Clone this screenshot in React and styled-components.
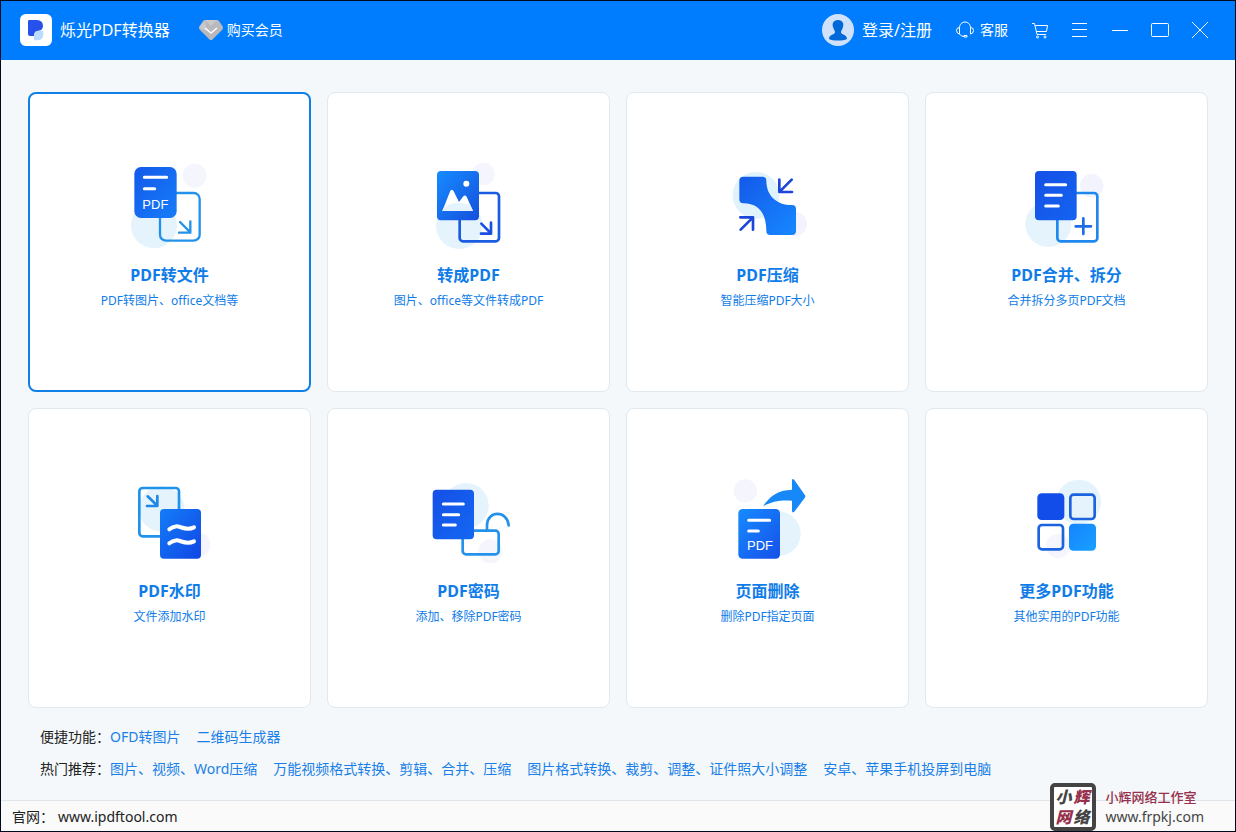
import React, { useState } from 'react';
import styled, { createGlobalStyle } from 'styled-components';

const GlobalStyle = createGlobalStyle`
  * {
    box-sizing: border-box;
  }

  body {
    margin: 0;
    font-family: "Noto Sans", "Noto Sans CJK SC", sans-serif;
    font-size: 14px;
    line-height: 20px;
    color: #222;
  }

  button {
    font-family: inherit;
    border: none;
    background: none;
    padding: 0;
    cursor: pointer;
  }

  a {
    text-decoration: none;
  }
`;

const Window = styled.div`
  position: relative;
  display: flex;
  flex-direction: column;
  min-height: 100vh;
  border: 1px solid #000a1c;
  background: #f4f8fa;
`;

const Header = styled.header`
  display: flex;
  align-items: center;
  height: 59px;
  padding: 0 15px 1px 19px;
  background: #007dff;
  color: #fff;
`;

const AppName = styled.h1`
  margin: 0 29px 0 8px;
  font-size: 16px;
  line-height: 24px;
  font-weight: 400;
`;

const HeaderButton = styled.button`
  display: flex;
  align-items: center;
  gap: ${({ $gap }) => $gap}px;
  margin-right: ${({ $after }) => $after || 0}px;
  color: #fff;
  font-size: ${({ $size }) => $size || 14}px;
  line-height: 24px;
`;

const Spacer = styled.div`
  flex: 1;
`;

const ToolButton = styled.button`
  display: flex;
  align-items: center;
  justify-content: center;
  width: 40px;
  height: 40px;
`;

const Stroke = styled.svg`
  fill: none;
  stroke: #fff;
  stroke-width: 1;
`;

const Main = styled.main`
  flex: 1;
  display: flex;
  flex-direction: column;
  padding: 32px 27px 15px;
`;

const Grid = styled.div`
  flex: 1;
  display: grid;
  grid-template-columns: repeat(4, 1fr);
  grid-auto-rows: 1fr;
  gap: 16px;
`;

const Card = styled.button`
  display: flex;
  flex-direction: column;
  align-items: center;
  justify-content: center;
  padding: 0 0 15px;
  min-height: 200px;
  border-radius: 8px;
  border: ${({ $active }) => ($active ? '2px solid #1080e6' : '1px solid #e1e9ee')};
  background: #fff;
  color: #0f7ce8;
`;

const CardIcon = styled.svg`
  width: 101px;
  height: 100px;
  font-family: "Liberation Sans", Arial, sans-serif;
`;

const CardTitle = styled.span`
  margin-top: 5px;
  font-size: 16px;
  line-height: 24px;
  font-weight: 700;
`;

const CardText = styled.span`
  margin-top: 4px;
  font-size: 12px;
  line-height: 20px;
`;

const Links = styled.section`
  margin-top: 13px;
  padding-left: 12px;
`;

const LinkRow = styled.div`
  display: flex;
  flex-wrap: wrap;
  column-gap: 16px;
  line-height: 32px;
`;

const LinkLabel = styled.span`
  width: 54px;
  white-space: nowrap;
`;

const Link = styled.a`
  color: #1a7fe8;
`;

const Footer = styled.footer`
  display: flex;
  align-items: center;
  height: 31px;
  padding: 2px 0 0 11px;
  border-top: 1px solid #e1e6ea;
  background: #fafafa;
`;

const SiteLink = styled.a`
  margin-left: 4px;
  color: #222;
`;

const Studio = styled.aside`
  position: absolute;
  right: 31px;
  bottom: 0;
  display: flex;
  align-items: center;
  gap: 9px;
`;

const Stamp = styled.div`
  display: grid;
  grid-template-columns: 18px 18px;
  align-content: center;
  justify-content: center;
  width: 46px;
  height: 48px;
  border: 4px solid #444;
  border-radius: 5px;
  background: #fff;
  color: #444;
  font-size: 16px;
  line-height: 20px;
  font-weight: 900;
  font-style: italic;
`;

const Red = styled.span`
  color: #96304c;
`;

const StudioText = styled.div`
  display: flex;
  flex-direction: column;
  color: #444;
`;

const StudioName = styled.span`
  color: #96304c;
  font-size: 13px;
  font-weight: 500;
`;

const Gradient = ({ id, from = '#1550e6', to = '#168cff' }) => (
  <defs>
    <linearGradient id={id} x1="0" y1="0" x2="1" y2="1">
      <stop offset="0" stopColor={from} />
      <stop offset="1" stopColor={to} />
    </linearGradient>
  </defs>
);

const ToFileIcon = () => (
  <CardIcon viewBox="87 24 303 300">
    <Gradient id="toFile" from="#1459ea" to="#167df8" />
    <circle cx="192" cy="226" r="69" fill="#e5f3fd" />
    <circle cx="314" cy="77" r="36" fill="#f5f5fe" />
    <rect x="210" y="129" width="119" height="143" rx="18" fill="none" stroke="#2492ea" strokeWidth="7" />
    <path d="M270 216l31 31M301 214v34h-34" fill="none" stroke="#2492ea" strokeWidth="7" strokeLinecap="round" strokeLinejoin="round" />
    <rect x="133" y="51" width="127" height="153" rx="20" fill="url(#toFile)" />
    <path d="M163 82h67M163 116h31" stroke="#fff" strokeWidth="9" strokeLinecap="round" />
    <text x="157" y="176" fontSize="39" fill="#fff">PDF</text>
  </CardIcon>
);

const ToPdfIcon = () => (
  <CardIcon viewBox="84 24 303 300">
    <Gradient id="toPdf" from="#168cff" to="#1550dc" />
    <circle cx="208" cy="227" r="70" fill="#e5f3fd" />
    <circle cx="280" cy="72" r="34" fill="#f5f5fe" />
    <rect x="209" y="129" width="118" height="145" rx="10" fill="none" stroke="#1a5bdf" strokeWidth="8" />
    <path d="M274 221l29 29M303 218v33h-30" fill="none" stroke="#1a4fe0" strokeWidth="8" strokeLinecap="round" strokeLinejoin="round" />
    <rect x="141" y="63" width="126" height="148" rx="12" fill="url(#toPdf)" />
    <circle cx="229" cy="101" r="9" fill="#fff" />
    <path d="M157 183L181 122Q186 115 191 124L207 156L220 139Q225 134 230 140L249 183Z" fill="#fff" />
    <path d="M160 174C180 158 200 157 218 160L240 164L249 183H157Z" fill="#e5f3fd" />
  </CardIcon>
);

const CompressIcon = () => (
  <CardIcon viewBox="81 24 303 300">
    <Gradient id="compress" from="#1459ea" to="#1688ff" />
    <circle cx="198" cy="136" r="70" fill="#e0f2fc" />
    <circle cx="315" cy="222" r="36" fill="#f3f3fe" />
    <path d="M160 80H217Q229 80 229 92C229 137 260 165 306 165Q318 165 318 177V243Q318 255 306 255H241Q229 255 229 243C229 194 209 160 160 160Q148 160 148 148V92Q148 80 160 80Z" fill="url(#compress)" />
    <path d="M305 89L269 125M268 89V126H306M152 239L188 203M151 202H189V239" fill="none" stroke="#1c45d9" strokeWidth="8" strokeLinecap="round" strokeLinejoin="round" />
  </CardIcon>
);

const MergeIcon = () => (
  <CardIcon viewBox="78 24 303 300">
    <Gradient id="merge" to="#1463f0" />
    <circle cx="175" cy="222" r="69" fill="#e5f3fd" />
    <circle cx="305" cy="107" r="35" fill="#f3f3fe" />
    <rect x="202" y="129" width="120" height="145" rx="10" fill="none" stroke="#1e88ee" strokeWidth="8" />
    <path d="M257 229h46M280 205v47" stroke="#1c6de6" strokeWidth="8" strokeLinecap="round" />
    <rect x="135" y="63" width="125" height="148" rx="12" fill="url(#merge)" />
    <path d="M167 104h60M167 136h47M167 168h38" stroke="#fff" strokeWidth="9" strokeLinecap="round" />
  </CardIcon>
);

const WatermarkIcon = () => (
  <CardIcon viewBox="87 24 303 300">
    <Gradient id="watermark" from="#147df9" to="#1046e4" />
    <circle cx="215" cy="129" r="68" fill="#e5f3fd" />
    <circle cx="325" cy="236" r="36" fill="#f5f3fe" />
    <rect x="148" y="66" width="119" height="145" rx="10" fill="none" stroke="#1f92ec" strokeWidth="8" />
    <path d="M173 91l29 28M202 90v30h-31" fill="none" stroke="#1f88e5" strokeWidth="8" strokeLinecap="round" strokeLinejoin="round" />
    <rect x="210" y="129" width="123" height="149" rx="12" fill="url(#watermark)" />
    <path d="M238 190C266 166 278 200 312 184M238 232C266 208 278 242 312 226" fill="none" stroke="#fff" strokeWidth="12" strokeLinecap="round" />
  </CardIcon>
);

const PasswordIcon = () => (
  <CardIcon viewBox="84 24 303 300">
    <Gradient id="password" to="#1467f3" />
    <circle cx="228" cy="119" r="68" fill="#e5f3fd" />
    <circle cx="301" cy="256" r="36" fill="#f5f5fe" />
    <rect x="218" y="194" width="108" height="71" rx="10" fill="none" stroke="#2492ea" strokeWidth="8" />
    <path d="M291 192V177C292 133 352 132 356 178" fill="none" stroke="#2492ea" strokeWidth="8" strokeLinecap="round" />
    <rect x="128" y="71" width="124" height="149" rx="12" fill="url(#password)" />
    <path d="M160 114h60M160 146h46M160 177h36" stroke="#fff" strokeWidth="9" strokeLinecap="round" />
  </CardIcon>
);

const DeleteIcon = () => (
  <CardIcon viewBox="81 24 303 300">
    <Gradient id="delete" from="#168cff" to="#1550e8" />
    <circle cx="265" cy="203" r="67" fill="#e5f3fd" />
    <circle cx="166" cy="75" r="35" fill="#f5f5fe" />
    <path d="M219 121C239 91 263 72 306 71V42Q308 36 313 42L344 86Q348 91 344 96L313 137Q308 142 306 136V104C270 102 246 106 219 121Z" fill="#1688f8" />
    <rect x="145" y="129" width="125" height="149" rx="13" fill="url(#delete)" />
    <path d="M176 163h63M176 195h29" stroke="#fff" strokeWidth="9" strokeLinecap="round" />
    <text x="171" y="251" fontSize="39" fill="#fff">PDF</text>
  </CardIcon>
);

const MoreIcon = () => (
  <CardIcon viewBox="78 24 303 300">
    <Gradient id="more" from="#1684ff" to="#18a0ff" />
    <circle cx="266" cy="108" r="67" fill="#e5f3fd" />
    <circle cx="204" cy="240" r="36" fill="#f5f5fe" />
    <rect x="142" y="82" width="81" height="80" rx="13" fill="#124ce9" />
    <rect x="241" y="86" width="73" height="73" rx="10" fill="none" stroke="#1c63df" strokeWidth="8" />
    <rect x="146" y="177" width="73" height="73" rx="10" fill="none" stroke="#1c63df" strokeWidth="8" />
    <rect x="237" y="173" width="81" height="81" rx="13" fill="url(#more)" />
  </CardIcon>
);

const LogoIcon = () => (
  <svg width="32" height="32" viewBox="0 0 96 96">
    <rect width="96" height="96" rx="17" fill="#fff" />
    <path d="M24 22Q24 18 28 18H51Q69 20 69 36Q69 50 53 51Q42 53 42 66H30Q24 66 24 60Z" fill="#2651ea" />
    <path d="M42 77V66Q42 50 56 50H64Q70 48 70 54V60Q70 80 50 79Q42 79 42 77Z" fill="#b9dcff" />
  </svg>
);

const VipIcon = () => (
  <svg width="24" height="20" viewBox="0 0 24 20">
    <path d="M6 0H18Q19 0 20 1L24 7Q24 9 23 10L13 20H11L1 10Q0 9 0 7L4 1Q5 0 6 0Z" fill="#b9b9bd" />
    <path d="M6 0H18L12 6ZM0 8L6 1L8 11Z" fill="#c9c9cc" />
    <path d="M6 8L12 13L18 8" fill="none" stroke="#fff" strokeWidth="1.5" />
  </svg>
);

const AvatarIcon = () => (
  <svg width="32" height="32" viewBox="0 0 32 32">
    <circle cx="16" cy="16" r="16" fill="#d0e2fb" />
    <path d="M16 6C11 6 10 10 11 13C12 16 13 17 13 18C13 21 7 20 7 25C11 27 21 27 25 25C25 20 19 21 19 18C19 17 20 16 21 13C22 10 21 6 16 6Z" fill="#0069d9" />
  </svg>
);

const HeadsetIcon = () => (
  <Stroke width="18" height="18" viewBox="0 0 18 18">
    <path d="M3.500 7C3.500 -1 14.500 -1 14.500 7M3.500 6.500Q.5 6.500 .5 9.500Q.5 12.500 3.500 13V6.500M14.500 6.500V13Q17.500 12.500 17.500 9.500Q17.500 6.500 14.500 6.500M3.500 13Q5 15.500 8 15.500M8 14.500h3v1.500h-3z" />
  </Stroke>
);

const CartIcon = () => (
  <Stroke width="16" height="17" viewBox="0 0 16 17">
    <path d="M0 1.500H2.500L5 12.500H14M3.500 3.500H15.500L14.500 9.500H4.500" />
    <circle cx="5.500" cy="15" r="1" />
    <circle cx="13" cy="15" r="1" />
  </Stroke>
);

const MenuIcon = () => (
  <Stroke width="16" height="14" viewBox="0 0 16 14">
    <path d="M0 .5H15M0 6.500H15M0 13.500H15" />
  </Stroke>
);

const MinimizeIcon = () => (
  <Stroke width="16" height="2" viewBox="0 0 16 2">
    <path d="M0 1.500H16" />
  </Stroke>
);

const MaximizeIcon = () => (
  <Stroke width="18" height="14" viewBox="0 0 18 14">
    <rect x=".5" y=".5" width="17" height="13" rx="1" />
  </Stroke>
);

const CloseIcon = () => (
  <Stroke width="18" height="18" viewBox="0 0 18 18">
    <path d="M1 1L17 17M17 1L1 17" />
  </Stroke>
);

const features = [
  { title: 'PDF转文件', text: 'PDF转图片、office文档等', Icon: ToFileIcon },
  { title: '转成PDF', text: '图片、office等文件转成PDF', Icon: ToPdfIcon },
  { title: 'PDF压缩', text: '智能压缩PDF大小', Icon: CompressIcon },
  { title: 'PDF合并、拆分', text: '合并拆分多页PDF文档', Icon: MergeIcon },
  { title: 'PDF水印', text: '文件添加水印', Icon: WatermarkIcon },
  { title: 'PDF密码', text: '添加、移除PDF密码', Icon: PasswordIcon },
  { title: '页面删除', text: '删除PDF指定页面', Icon: DeleteIcon },
  { title: '更多PDF功能', text: '其他实用的PDF功能', Icon: MoreIcon },
];

const linkRows = [
  { label: '便捷功能：', links: ['OFD转图片', '二维码生成器'] },
  {
    label: '热门推荐：',
    links: [
      '图片、视频、Word压缩',
      '万能视频格式转换、剪辑、合并、压缩',
      '图片格式转换、裁剪、调整、证件照大小调整',
      '安卓、苹果手机投屏到电脑',
    ],
  },
];

const tools = [
  { label: '购物车', Icon: CartIcon },
  { label: '菜单', Icon: MenuIcon },
  { label: '最小化', Icon: MinimizeIcon },
  { label: '最大化', Icon: MaximizeIcon },
  { label: '关闭', Icon: CloseIcon },
];

const App = () => {
  const [active, setActive] = useState(0);

  return (
    <Window lang="zh-CN">
      <GlobalStyle />
      <Header>
        <LogoIcon />
        <AppName>烁光PDF转换器</AppName>
        <HeaderButton type="button" $gap={4}>
          <VipIcon />
          购买会员
        </HeaderButton>
        <Spacer />
        <HeaderButton type="button" $gap={8} $after={24} $size={16}>
          <AvatarIcon />
          登录/注册
        </HeaderButton>
        <HeaderButton type="button" $gap={6} $after={12}>
          <HeadsetIcon />
          客服
        </HeaderButton>
        {tools.map(({ label, Icon }) => (
          <ToolButton type="button" key={label} aria-label={label}>
            <Icon />
          </ToolButton>
        ))}
      </Header>

      <Main>
        <Grid>
          {features.map(({ title, text, Icon }, index) => (
            <Card type="button" key={title} $active={index === active} onClick={() => setActive(index)}>
              <Icon />
              <CardTitle>{title}</CardTitle>
              <CardText>{text}</CardText>
            </Card>
          ))}
        </Grid>
        <Links>
          {linkRows.map(({ label, links }) => (
            <LinkRow key={label}>
              <LinkLabel>{label}</LinkLabel>
              {links.map((link) => (
                <Link href="#" key={link}>{link}</Link>
              ))}
            </LinkRow>
          ))}
        </Links>
      </Main>

      <Footer>
        官网：
        <SiteLink href="#">www.ipdftool.com</SiteLink>
      </Footer>

      <Studio>
        <Stamp>
          <span>小</span>
          <Red>辉</Red>
          <Red>网</Red>
          <span>络</span>
        </Stamp>
        <StudioText>
          <StudioName>小辉网络工作室</StudioName>
          <span>www.frpkj.com</span>
        </StudioText>
      </Studio>
    </Window>
  );
};

export default App;
